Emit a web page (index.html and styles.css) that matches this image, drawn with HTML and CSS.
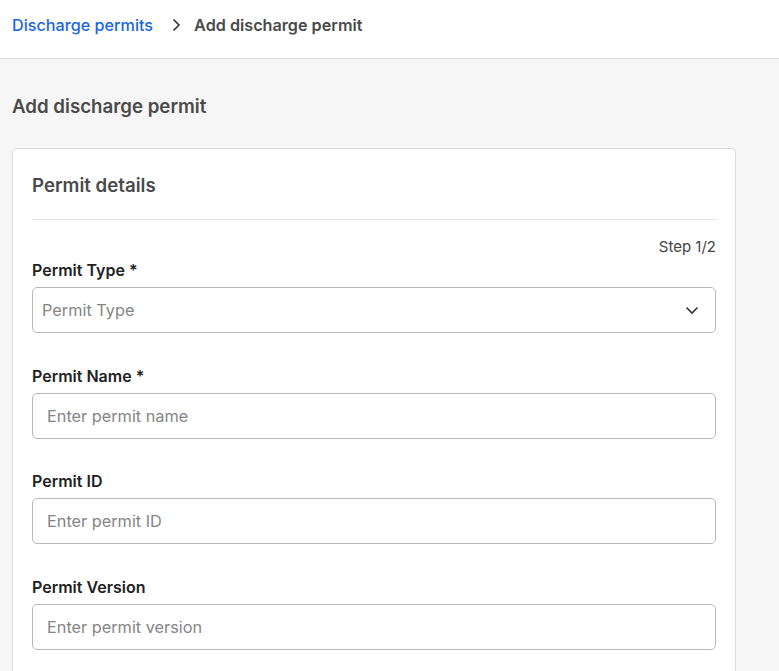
FILE: index.html
```html
<!DOCTYPE html>
<html>
<head>
<meta charset="utf-8">
<link rel="stylesheet" href="styles.css">
</head>
<body>
<header class="topbar">
  <nav class="crumbs">
    <a class="crumb-link" href="#">Discharge permits</a>
    <svg class="crumb-sep" width="16" height="16" viewBox="0 0 16 16"><path d="M5.5 2.5 L11 8 L5.5 13.5" fill="none" stroke="#333" stroke-width="1.6"/></svg>
    <span class="crumb-current">Add discharge permit</span>
  </nav>
</header>
<main class="page">
  <h1 class="page-title">Add discharge permit</h1>
  <section class="card">
    <h2 class="card-title">Permit details</h2>
    <div class="divider"></div>
    <div class="step">Step 1/2</div>
    <div class="field first">
      <label class="label">Permit Type *</label>
      <div class="select">
        <span class="select-ph">Permit Type</span>
        <svg class="chev" width="16" height="16" viewBox="0 0 16 16"><path d="M2.5 5.5 L8 11 L13.5 5.5" fill="none" stroke="#333" stroke-width="1.6"/></svg>
      </div>
    </div>
    <div class="field">
      <label class="label">Permit Name *</label>
      <input class="input" type="text" placeholder="Enter permit name">
    </div>
    <div class="field">
      <label class="label">Permit ID</label>
      <input class="input" type="text" placeholder="Enter permit ID">
    </div>
    <div class="field">
      <label class="label">Permit Version</label>
      <input class="input" type="text" placeholder="Enter permit version">
    </div>
  </section>
</main>
</body>
</html>
```
FILE: styles.css
```css
html, body { margin: 0; padding: 0; }
body {
  font-family: Inter, "Noto Sans", sans-serif;
  background: #f6f6f6;
  height: 671px;
  overflow: hidden;
}
.topbar {
  background: #fff;
  height: 58px;
  border-bottom: 1px solid #dcdcdc;
  display: flex;
  align-items: center;
  padding: 0 12px;
  box-sizing: content-box;
}
.crumbs { display: flex; align-items: center; margin-top: -8px; }
.crumb-link { color: #1a66dd; text-decoration: none; font-size: 16.2px; font-weight: 500; }
.crumb-sep { margin: 0 10px 0 15px; }
.crumb-current { color: #4a4a4a; font-size: 16.2px; font-weight: 600; }
.page { padding: 0 12px; }
.page-title {
  margin: 0;
  padding-top: 36px;
  font-size: 18.7px;
  font-weight: 600;
  color: #4a4a4a;
  line-height: 24px;
}
.card {
  margin-top: 29px;
  width: 684px;
  background: #fff;
  border: 1px solid #dcdcdc;
  border-bottom: none;
  border-radius: 5px 5px 0 0;
  padding: 25px 19px 30px 19px;
  height: 600px;
}
.card-title {
  margin: 0;
  font-size: 18.7px;
  font-weight: 600;
  color: #4a4a4a;
  line-height: 24px;
}
.divider { height: 1px; background: #e4e4e4; margin-top: 21px; }
.step { text-align: right; font-size: 15px; color: #444; line-height: 20px; margin-top: 17px; }
.field { margin-top: 32.5px; }
.field.first { margin-top: 3px; }
.label { display: block; font-size: 16px; font-weight: 600; color: #222; line-height: 20px; margin-bottom: 7px; }
.select, .input {
  box-sizing: border-box;
  width: 684px;
  height: 46px;
  border: 1px solid #b9b9b9;
  border-radius: 5px;
  background: #fff;
  font-family: inherit;
  font-size: 16.3px;
}
.select { display: flex; align-items: center; justify-content: space-between; padding: 0 15px 0 9px; }
.select-ph { color: #858585; }
.input { padding: 0 14px; color: #222; outline: none; display: block; }
.input::placeholder { color: #858585; }
```
